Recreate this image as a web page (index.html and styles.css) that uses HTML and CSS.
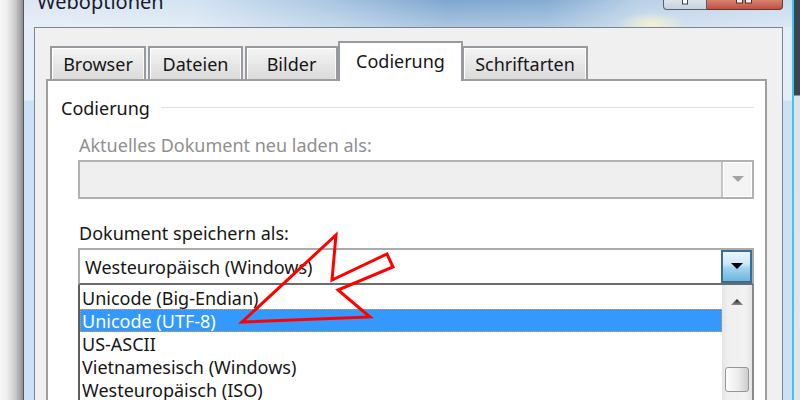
FILE: index.html
```html
<!DOCTYPE html>
<html lang="de">
<head>
<meta charset="utf-8">
<title>Weboptionen</title>
<link rel="stylesheet" href="styles.css">
</head>
<body>
<div class="desk">
  <div class="shadow"></div>
  <div class="window">
    <div class="titlebar">
      <span class="title">Weboptionen</span>
      <div class="caption">
        <div class="cbtn help"><svg width="10" height="6" viewBox="0 0 10 6"><rect x="2.5" y="-2" width="5" height="6" fill="#fff" stroke="#3a4450" stroke-width="1"/></svg></div>
        <div class="cbtn close"><svg width="22" height="6" viewBox="0 0 22 6"><rect x="2.5" y="-2" width="6" height="5" fill="#fff" stroke="#5a2a22" stroke-width="1"/><rect x="11.5" y="-2" width="6" height="5" fill="#fff" stroke="#5a2a22" stroke-width="1"/></svg></div>
      </div>
    </div>
    <div class="body">
      <div class="client">
        <div class="tabs">
          <div class="tab t-browser">Browser</div>
          <div class="tab t-dateien">Dateien</div>
          <div class="tab t-bilder">Bilder</div>
          <div class="tab t-cod active">Codierung</div>
          <div class="tab t-schrift">Schriftarten</div>
        </div>
        <div class="panel">
          <div class="group-head">
            <span class="group-label">Codierung</span>
            <span class="group-line"></span>
          </div>
          <div class="group-body">
            <div class="field-label disabled">Aktuelles Dokument neu laden als:</div>
            <div class="combo combo-disabled">
              <div class="combo-btn-dis">
                <svg width="12" height="7" viewBox="0 0 12 7"><path d="M0 0 H12 L6 6 Z" fill="#a3a3a3"/></svg>
              </div>
            </div>
            <div class="field-label save">Dokument speichern als:</div>
            <div class="combo combo-active">
              <span class="combo-value">Westeuropäisch (Windows)</span>
              <div class="combo-btn">
                <svg width="12" height="7" viewBox="0 0 12 7"><path d="M0 0 H12 L6 6 Z" fill="#000"/></svg>
              </div>
            </div>
            <div class="list">
              <div class="items">
                <div class="item">Unicode (Big-Endian)</div>
                <div class="item selected">Unicode (UTF-8)</div>
                <div class="item">US-ASCII</div>
                <div class="item">Vietnamesisch (Windows)</div>
                <div class="item">Westeuropäisch (ISO)</div>
              </div>
              <div class="scrollbar">
                <div class="sb-up">
                  <svg width="12" height="7" viewBox="0 0 12 7"><defs><linearGradient id="ug" x1="0" y1="0" x2="0" y2="1"><stop offset="0" stop-color="#1e1e1e"/><stop offset="1" stop-color="#8a8a8a"/></linearGradient></defs><path d="M0 6 H12 L6 0 Z" fill="url(#ug)"/></svg>
                </div>
                <div class="sb-thumb"></div>
              </div>
            </div>
          </div>
        </div>
      </div>
    </div>
  </div>
  <div class="edge"></div>
</div>
<svg class="annot" width="800" height="400" viewBox="0 0 800 400">
  <polygon points="336,235 332,280 387,254 393,267 338,290 370,317 242,322" fill="none" stroke="#ff0000" stroke-width="3" stroke-linejoin="miter"/>
</svg>
</body>
</html>
```

FILE: styles.css
```css
* { box-sizing: border-box; }
html, body { margin: 0; padding: 0; }
body {
  width: 800px;
  height: 400px;
  overflow: hidden;
  position: relative;
  background: #fff;
  font-family: "Noto Sans", "Open Sans", sans-serif;
  font-size: 18px;
  color: #161616;
}
.desk { display: flex; height: 400px; overflow: hidden; }
.shadow {
  width: 23px;
  flex: none;
  background: linear-gradient(90deg, #f7f7f7 0%, #ececec 30%, #cdcdcd 65%, #8f8f8f 100%);
}
.window {
  width: 771px;
  flex: none;
  display: flex;
  flex-direction: column;
  border-left: 1px solid #4e5966;
  border-right: 2px solid #3ec6ef;
  background: linear-gradient(180deg, #e4eef8 0, #e4eef8 100px, #cde1f4 101px, #cde1f4 100%);
}
.edge {
  flex: 1;
  background: linear-gradient(180deg, #3a4550 0, #3a4550 95px, #dfe3e6 96px, #e3e6e8 100%);
}
.titlebar {
  height: 27px;
  flex: none;
  display: flex;
  align-items: flex-start;
  padding-left: 13px;
  background:
    radial-gradient(ellipse 34px 12px at 628px 24px, rgba(255, 248, 200, .75), rgba(255, 248, 200, 0)),
    linear-gradient(180deg, rgba(255,255,255,0) 0, rgba(255,255,255,.35) 100%),
    linear-gradient(90deg, #dbe7f3 0, #d3e3f2 22%, #a9c6e2 40%, #7ea7d0 55%, #84acd3 68%, #b9d0e7 80%, #c9dcee 100%);
}
.title {
  display: block;
  margin-top: -8px;
  font-size: 20px;
  line-height: 20px;
  color: #1a1a2a;
}
.caption { margin-left: auto; margin-right: 9px; display: flex; margin-top: -3px; }
.cbtn { height: 13px; display: flex; justify-content: center; align-items: flex-start; }
.help {
  width: 44px;
  border: 1px solid #56606b;
  border-top: none;
  border-radius: 0 0 0 4px;
  background: linear-gradient(180deg, #e3e9f0, #c7d2dd);
}
.close {
  width: 76px;
  border: 1px solid #5d3a33;
  border-top: none;
  border-left: none;
  border-radius: 0 0 4px 0;
  background: linear-gradient(180deg, #dd9482, #c4503f);
}
.help svg, .close svg { margin-top: 3px; }
.body { flex: 1; display: flex; padding: 0 9px 0 10px; min-height: 0; }
.client {
  flex: 1;
  display: flex;
  flex-direction: column;
  border: 1px solid #7b858f;
  border-bottom: none;
  background: #f0f0f0;
}
.tabs {
  display: flex;
  align-items: flex-start;
  padding: 13px 0 0 15px;
  margin-bottom: -2px;
  position: relative;
  z-index: 1;
}
.tab {
  height: 33px;
  margin-top: 5px;
  border: 2px solid #979a9e;
  border-bottom: none;
  background: linear-gradient(180deg, #f4f4f4, #dbdbdb);
  box-shadow: inset 1px 1px 0 #fff, inset -1px 0 0 #fafafa;
  display: flex;
  align-items: center;
  justify-content: center;
}
.t-browser { width: 96px; margin-right: 2px; }
.t-dateien { width: 95px; margin-right: 2px; }
.t-bilder { width: 93px; }
.t-cod { width: 125px; }
.t-schrift { width: 126px; margin-left: -1px; }
.tab.active {
  height: 40px;
  margin-top: 0;
  background: #fff;
  box-shadow: none;
  padding-bottom: 2px;
  position: relative;
  z-index: 2;
}
.panel {
  flex: 1;
  margin: 0 15px 0 11px;
  border: 2px solid #9e9e9e;
  border-bottom: none;
  background: #fff;
  padding: 16px 11px 0 13px;
}
.group-head { display: flex; align-items: center; height: 22px; }
.group-label { line-height: 22px; }
.group-line { flex: 1; margin-left: 11px; border-top: 1px solid #d5dfe6; margin-top: -1px; }
.group-body { padding-left: 17px; }
.field-label { height: 22px; line-height: 22px; padding-left: 1px; }
.field-label.disabled { margin-top: 15px; color: #8f8f8f; }
.field-label.save { margin-top: 23px; }
.combo { display: flex; align-items: stretch; margin-top: 4px; }
.combo-disabled {
  height: 39px;
  border: 2px solid #b1b1b1;
  background: #efefef;
  justify-content: flex-end;
}
.combo-btn-dis {
  width: 31px;
  border-left: 2px solid #c4c4c4;
  background: #f4f4f4;
  box-shadow: inset 1px 1px 0 #fff, inset -1px -1px 0 #fff;
  display: flex;
  align-items: center;
  justify-content: center;
}
.combo-active {
  height: 37px;
  border: 2px solid #ababab;
  border-bottom-color: #6b6b6b;
  background: #fff;
  align-items: center;
}
.combo-value { flex: 1; padding-left: 5px; line-height: 22px; }
.combo-btn {
  width: 31px;
  height: 100%;
  border: 2px solid #3b6d93;
  background: linear-gradient(180deg, #e9f5fc 0%, #cdeaf9 40%, #9fd4f0 55%, #6db6de 100%);
  display: flex;
  align-items: center;
  justify-content: center;
}
.list {
  display: flex;
  height: 115px;
  border-left: 2px solid #5f5f5f;
  border-right: 2px solid #8a8a8a;
}
.items { flex: 1; padding-top: 0; }
.item {
  height: 23px;
  line-height: 21px;
  padding-top: 2px;
  padding-left: 2px;
  white-space: nowrap;
}
.item:first-child { height: 24px; padding-top: 3px; }
.item.selected {
  background: #3399ff;
  color: #fff;
  outline: 1px dotted #e2953d;
  outline-offset: -1px;
}
.scrollbar {
  width: 30px;
  flex: none;
  background: linear-gradient(90deg, #e4e4e4, #efefef 20%, #f2f2f2 80%, #e4e4e4);
  display: flex;
  flex-direction: column;
  align-items: center;
}
.sb-up { height: 34px; display: flex; align-items: center; justify-content: center; }
.sb-thumb {
  margin-top: 48px;
  width: 24px;
  height: 25px;
  border: 1px solid #969696;
  border-radius: 3px;
  background: linear-gradient(90deg, #fdfdfd, #ececec 55%, #cdcdcd);
}
.annot { position: absolute; left: 0; top: 0; pointer-events: none; }
```
